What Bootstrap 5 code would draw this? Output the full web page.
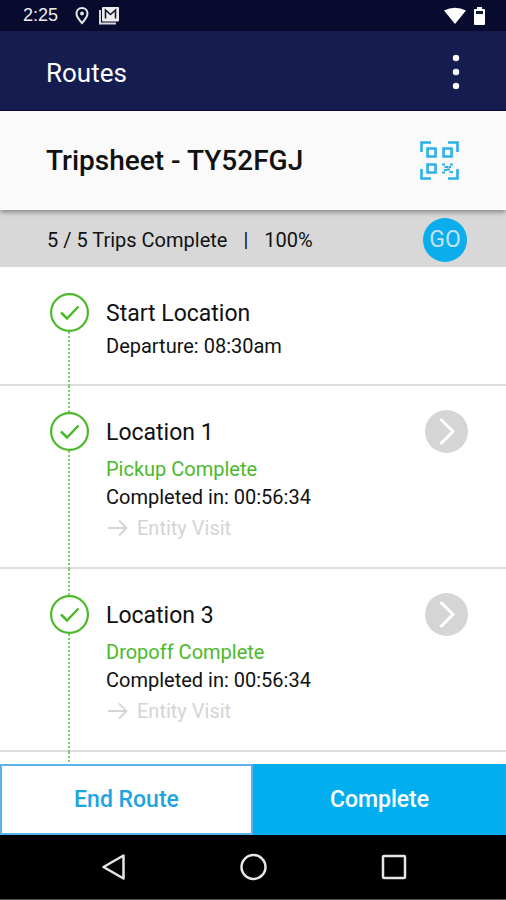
<!DOCTYPE html>
<html lang="en">
<head>
<meta charset="utf-8">
<meta name="viewport" content="width=device-width, initial-scale=1">
<title>Routes</title>
<link href="https://cdn.jsdelivr.net/npm/bootstrap@5.3.0/dist/css/bootstrap.min.css" rel="stylesheet">
<style>
  body { font-family: Roboto, "Liberation Sans", sans-serif; color: #111; background: #fff; }
  svg { display: block; flex: none; }
  .status-bar { background: #080b2e; height: 31px; padding: 0 21px 0 23px; font: 400 18px/31px "Liberation Sans", sans-serif; color: #eee; }
  .app-bar { background: #151c4f; height: 80px; padding: 4px 38px 0 46px; border-bottom: 1px solid #0c1030; }
  .app-title { font-size: 26px; line-height: 32px; }
  .icon-btn { background: none; border: 0; padding: 0; }
  .sheet-bar { background: #fafafa; height: 99px; padding: 0 47px 0 46px; box-shadow: 0 2px 5px rgba(0,0,0,.4); z-index: 1; }
  .sheet-title { font-size: 28px; line-height: 36px; font-weight: 500; }
  .progress-bar-row { background: #d8d8d8; height: 57px; padding: 2px 39px 0 47px; font-size: 20px; line-height: 28px; }
  .go-btn { width: 44px; height: 44px; background: #0cadec; color: #c5e2ee; border: 0; padding: 0; font-size: 23px; line-height: 44px; }
  .stop { padding: 0 38px 0 50px; gap: 17px; }
  .stop-ruled { box-shadow: inset 0 -2px #dcdcdc; }
  .rail { width: 39px; }
  .rail-line { width: 2px; margin-right: 2px; background: repeating-linear-gradient(#7fcf68 0 2px, transparent 2px 4px); }
  .rail-top { height: 26px; }
  .stop-body { padding: 31px 0 24px; }
  .stop-name { font-size: 23px; line-height: 32px; font-weight: 400; margin: 0; }
  .stop-text { font-size: 20px; line-height: 28px; }
  .stop-start { margin: 2px 0; }
  .stop-done { color: #4bb92a; margin-top: 6px; }
  .entity-link { font-size: 20px; line-height: 34px; color: #d4d4d4; gap: 9px; padding-left: 2px; }
  .open-btn { width: 43px; height: 43px; margin-top: 24px; background: #d5d5d5; border: 0; padding: 0; }
  .action-btn { height: 71px; border: 2px solid #0aaeef; border-radius: 0; font-size: 23px; line-height: 32px; font-weight: 500; }
  .end-btn, .end-btn:hover { background: #fff; color: #1ea4df; border-color: #5ab4ea; }
  .done-btn, .done-btn:hover { background: #03aeef; color: #fff; }
  .system-nav { background: #000; height: 65px; padding: 0 98px; border-bottom: 1px solid #555; }
</style>
</head>
<body>
<div class="d-flex flex-column min-vh-100">
  <div class="status-bar d-flex align-items-center">
    <span>2:25</span>
    <svg class="ms-3" width="16" height="20" viewBox="0 0 16 20" fill="none" stroke="#e8e8e8" stroke-width="2"><path d="M8 2C4.600 2 2.500 4.500 2.500 7.500C2.500 11 8 17 8 17S13.500 11 13.500 7.500C13.500 4.500 11.400 2 8 2Z"/><circle cx="8" cy="7.500" r="1.500" fill="#e8e8e8" stroke-width="1"/></svg>
    <svg class="ms-2" width="22" height="20" viewBox="0 0 22 20"><path d="M2 4V17.500H18" fill="none" stroke="#d8d8d8" stroke-width="2"/><rect x="4" y="1" width="17" height="14.500" rx="1" fill="#eee"/><path d="M7.500 12.500V4L12.500 8.500L17.500 4V12.500" fill="none" stroke="#141830" stroke-width="1.600"/></svg>
    <svg class="ms-auto" width="22" height="18" viewBox="0 0 22 18"><path d="M0 3.500Q11-2 22 3.500L11 17Z" fill="#fff"/></svg>
    <svg class="ms-2" width="11" height="18" viewBox="0 0 11 18"><path d="M3 0H8V2H10Q11 2 11 3V17Q11 18 10 18H1Q0 18 0 17V3Q0 2 1 2H3Z" fill="#fff"/><path d="M2 4H9V7H2Z" fill="#161a38"/></svg>
  </div>

  <header class="app-bar d-flex align-items-center justify-content-between text-white">
    <div class="app-title">Routes</div>
    <button class="icon-btn" type="button" aria-label="More options">
      <svg width="24" height="38" viewBox="0 0 24 38" fill="#fff"><circle cx="12" cy="4" r="3.200"/><circle cx="12" cy="18" r="3.200"/><circle cx="12" cy="32" r="3.200"/></svg>
    </button>
  </header>

  <div class="sheet-bar d-flex align-items-center justify-content-between position-relative">
    <h1 class="sheet-title m-0">Tripsheet - TY52FGJ</h1>
    <button class="icon-btn" type="button" aria-label="Scan code">
      <svg width="39" height="39" viewBox="0 0 39 39" fill="none" stroke="#2bb0e8" stroke-width="2.600"><path d="M1.500 11V1.500H11M28 1.500H37.500V11M37.500 28V37.500H28M11 37.500H1.500V28"/><path d="M7.500 7.500H15.500V15.500H7.500ZM23.500 7.500H31.500V15.500H23.500ZM7.500 23.500H15.500V31.500H7.500Z"/><path d="M22 23.500H25M24.500 26H28M27 28.500H30M29.500 31H33M30 23.500H33M28.500 26H31M24 29H27M22 31.500H25" stroke-width="2"/></svg>
    </button>
  </div>

  <div class="progress-bar-row d-flex align-items-center">
    <span>5 / 5 Trips Complete</span><span class="px-3">|</span><span>100%</span>
    <button class="go-btn rounded-circle ms-auto" type="button">GO</button>
  </div>

  <main class="d-flex flex-column flex-grow-1">
    <section class="stop stop-ruled d-flex">
      <div class="rail d-flex flex-column align-items-center">
        <div class="rail-top"></div>
        <svg width="39" height="39" viewBox="0 0 39 39" fill="none" stroke="#4bb92a"><circle cx="19.500" cy="19.500" r="18.400" stroke-width="2.200"/><path d="M11 19.500L17 25.500L28.500 13.500" stroke-width="2.500"/></svg>
        <div class="rail-line flex-grow-1"></div>
      </div>
      <div class="stop-body flex-grow-1">
        <h2 class="stop-name">Start Location</h2>
        <div class="stop-text stop-start">Departure: 08:30am</div>
      </div>
    </section>

    <section class="stop stop-ruled d-flex">
      <div class="rail d-flex flex-column align-items-center">
        <div class="rail-line rail-top"></div>
        <svg width="39" height="39" viewBox="0 0 39 39" fill="none" stroke="#4bb92a"><circle cx="19.500" cy="19.500" r="18.400" stroke-width="2.200"/><path d="M11 19.500L17 25.500L28.500 13.500" stroke-width="2.500"/></svg>
        <div class="rail-line flex-grow-1"></div>
      </div>
      <div class="stop-body flex-grow-1">
        <h2 class="stop-name">Location 1</h2>
        <div class="stop-text stop-done">Pickup Complete</div>
        <div class="stop-text">Completed in: 00:56:34</div>
        <a class="entity-link d-flex align-items-center text-decoration-none" href="#"><svg width="20" height="18" viewBox="0 0 20 18" fill="none" stroke="#d4d4d4" stroke-width="1.800"><path d="M0 9H18M11 1.500L18.500 9L11 16.500"/></svg>Entity Visit</a>
      </div>
      <button class="open-btn rounded-circle flex-shrink-0" type="button" aria-label="Open Location 1">
        <svg width="43" height="43" viewBox="0 0 43 43" fill="none" stroke="#fff" stroke-width="3"><path d="M15.500 9L28 21.500L15.500 34"/></svg>
      </button>
    </section>

    <section class="stop stop-ruled d-flex">
      <div class="rail d-flex flex-column align-items-center">
        <div class="rail-line rail-top"></div>
        <svg width="39" height="39" viewBox="0 0 39 39" fill="none" stroke="#4bb92a"><circle cx="19.500" cy="19.500" r="18.400" stroke-width="2.200"/><path d="M11 19.500L17 25.500L28.500 13.500" stroke-width="2.500"/></svg>
        <div class="rail-line flex-grow-1"></div>
      </div>
      <div class="stop-body flex-grow-1">
        <h2 class="stop-name">Location 3</h2>
        <div class="stop-text stop-done">Dropoff Complete</div>
        <div class="stop-text">Completed in: 00:56:34</div>
        <a class="entity-link d-flex align-items-center text-decoration-none" href="#"><svg width="20" height="18" viewBox="0 0 20 18" fill="none" stroke="#d4d4d4" stroke-width="1.800"><path d="M0 9H18M11 1.500L18.500 9L11 16.500"/></svg>Entity Visit</a>
      </div>
      <button class="open-btn rounded-circle flex-shrink-0" type="button" aria-label="Open Location 3">
        <svg width="43" height="43" viewBox="0 0 43 43" fill="none" stroke="#fff" stroke-width="3"><path d="M15.500 9L28 21.500L15.500 34"/></svg>
      </button>
    </section>

    <div class="stop d-flex flex-grow-1">
      <div class="rail d-flex flex-column align-items-center"><div class="rail-line flex-grow-1"></div></div>
    </div>
  </main>

  <div class="d-flex">
    <button class="btn action-btn end-btn w-50" type="button">End Route</button>
    <button class="btn action-btn done-btn w-50" type="button">Complete</button>
  </div>

  <nav class="system-nav d-flex align-items-center justify-content-between" aria-label="System">
    <button class="icon-btn" type="button" aria-label="Back"><svg width="30" height="30" viewBox="0 0 30 30" fill="none" stroke="#e6e6e6" stroke-width="2.500" stroke-linejoin="round"><path d="M5.500 15L25.500 3.500V26.500Z"/></svg></button>
    <button class="icon-btn" type="button" aria-label="Home"><svg width="30" height="30" viewBox="0 0 30 30" fill="none" stroke="#e6e6e6" stroke-width="2.500"><circle cx="15.500" cy="15" r="12"/></svg></button>
    <button class="icon-btn" type="button" aria-label="Recent apps"><svg width="30" height="30" viewBox="0 0 30 30" fill="none" stroke="#e6e6e6" stroke-width="2.500"><rect x="5" y="4" width="22" height="22" rx="1"/></svg></button>
  </nav>
</div>
<script src="https://cdn.jsdelivr.net/npm/bootstrap@5.3.0/dist/js/bootstrap.bundle.min.js"></script>
</body>
</html>
